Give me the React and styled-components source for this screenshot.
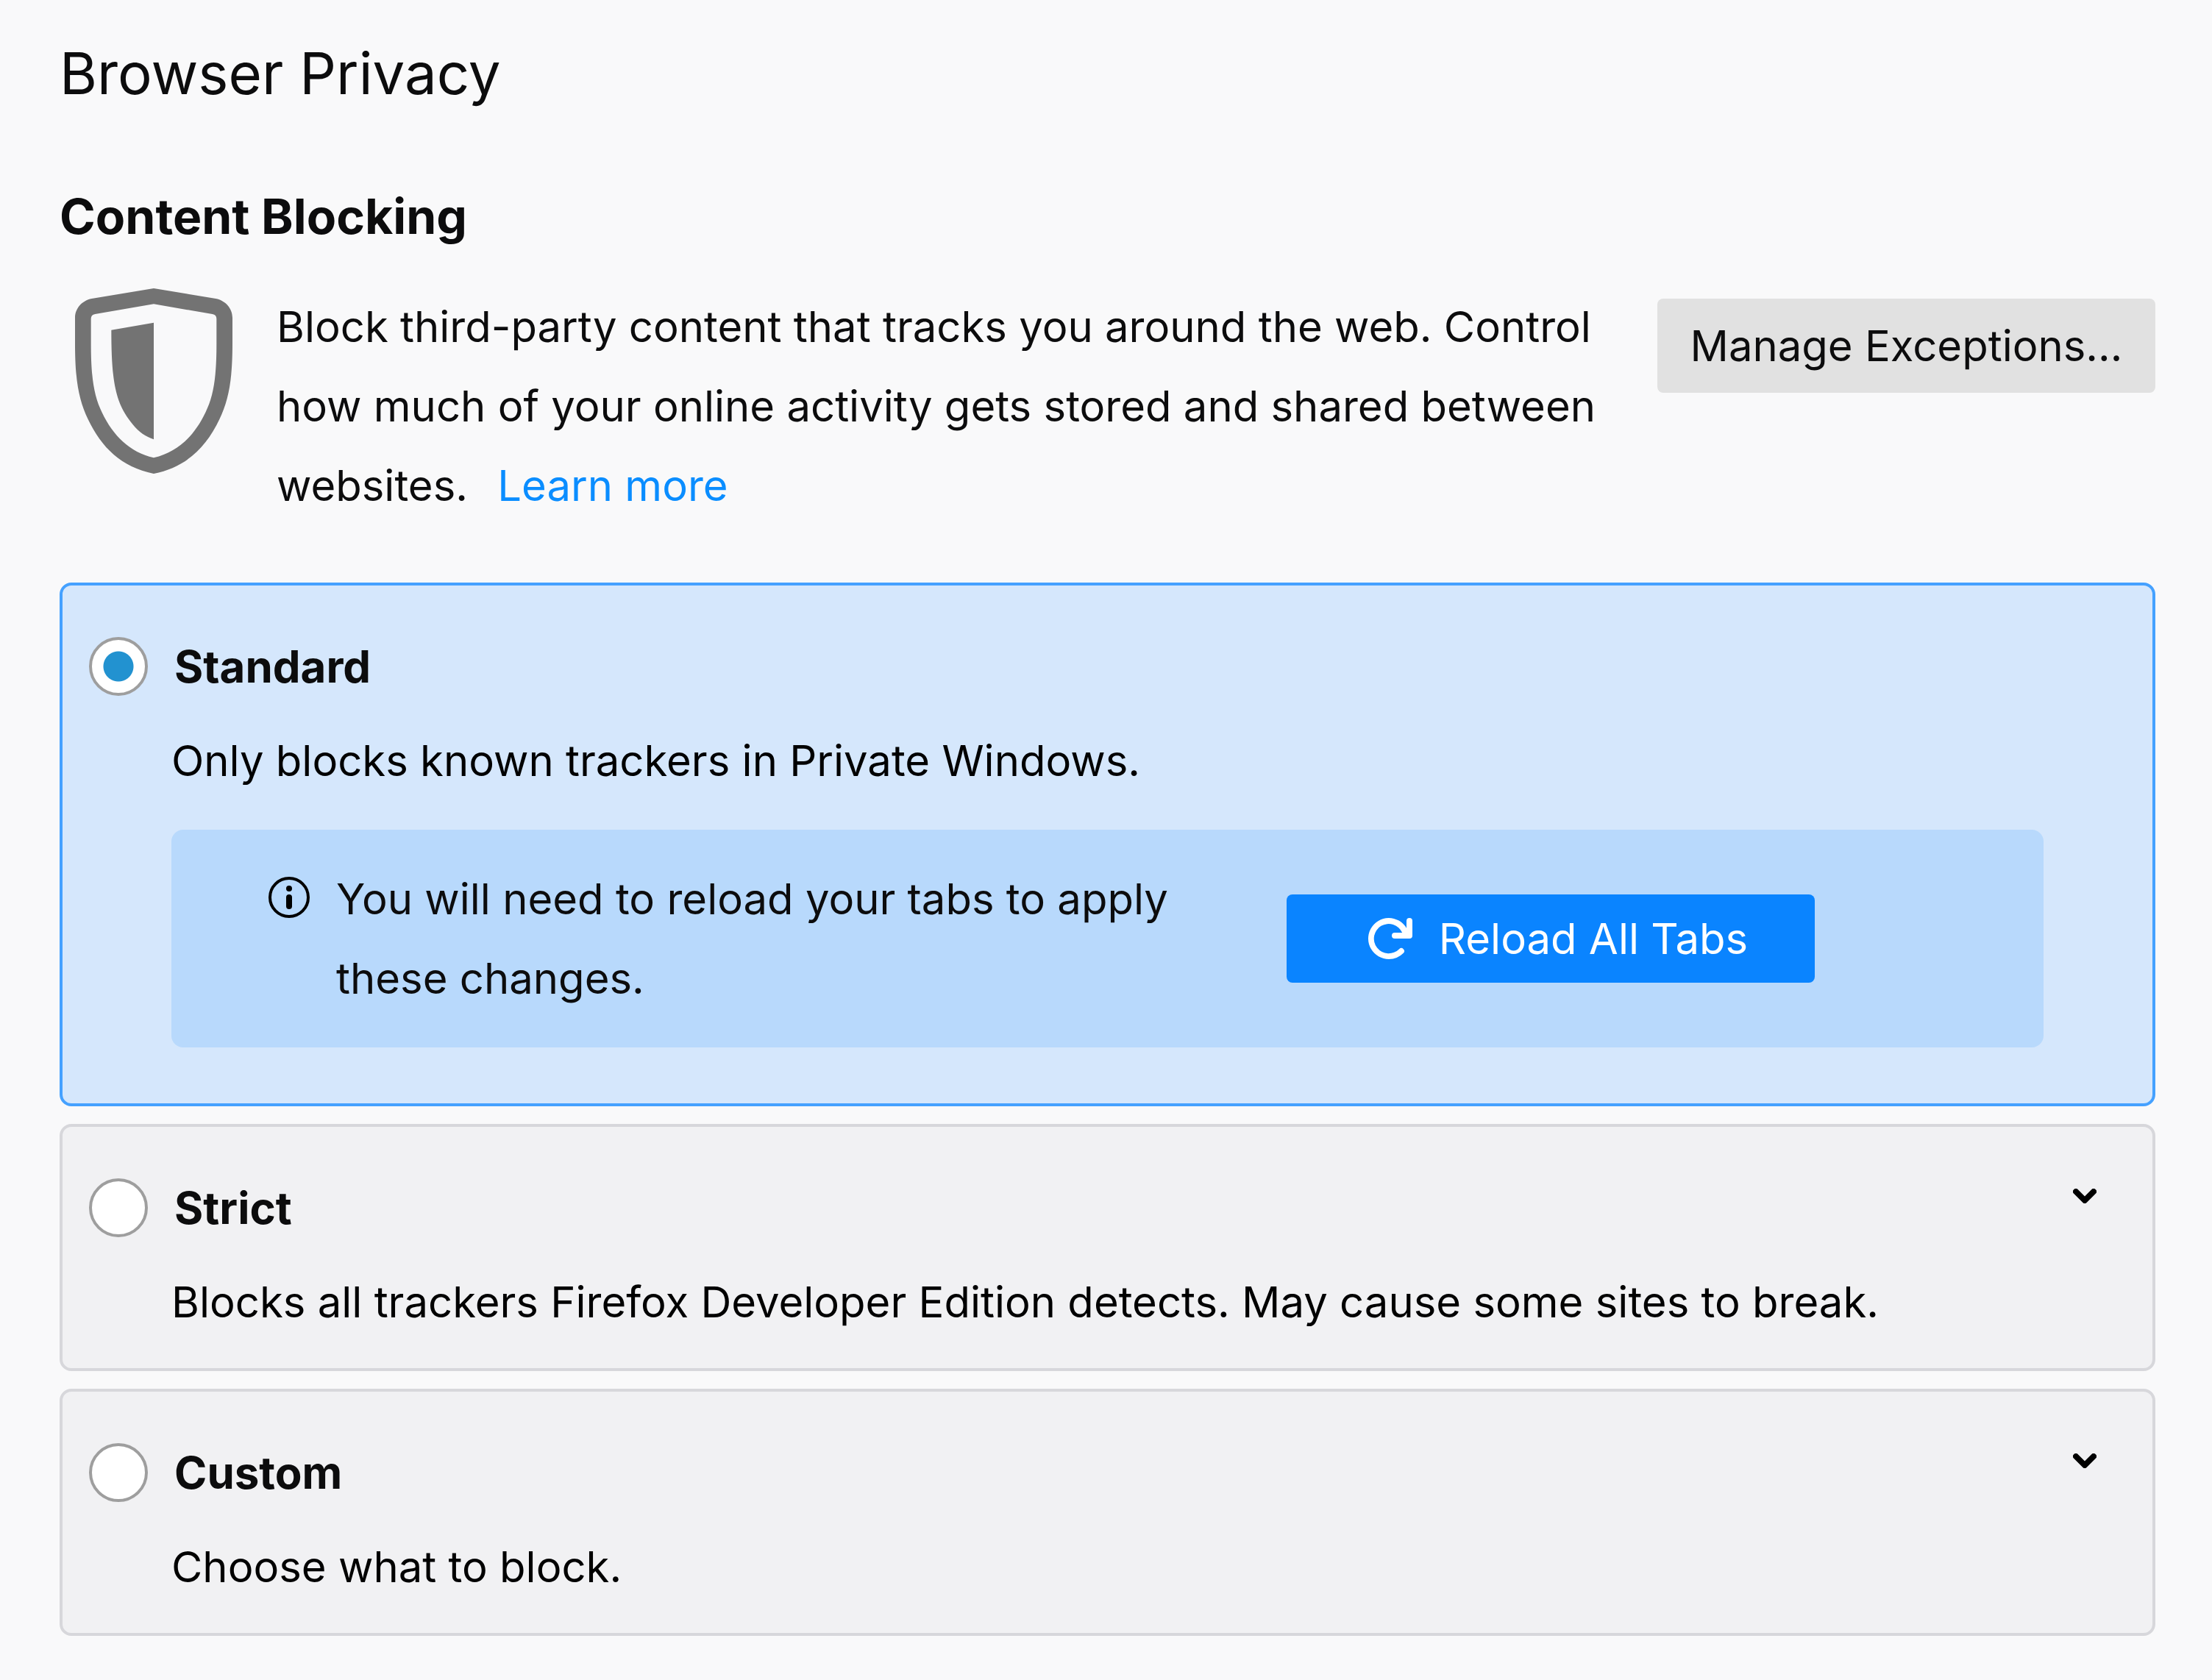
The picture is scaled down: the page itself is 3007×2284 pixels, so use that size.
import React, { useState } from "react";
import styled, { createGlobalStyle } from "styled-components";

const GlobalStyle = createGlobalStyle`
  *, *::before, *::after { box-sizing: border-box; }
  body {
    margin: 0;
    background: #f9f9fa;
    color: #0c0c0d;
    font-family: Inter, "Liberation Sans", sans-serif;
    font-size: 58px;
    line-height: 108px;
  }
  button, input { font: inherit; color: inherit; }
`;

const Page = styled.main`
  padding: 46px 77px 60px 81px;
`;

const PageTitle = styled.h1`
  margin: 0 0 86px;
  font-size: 78px;
  font-weight: 400;
`;

const SectionTitle = styled.h2`
  margin: 0 0 42px;
  font-size: 66px;
  font-weight: 700;
`;

const Intro = styled.div`
  display: flex;
  align-items: flex-start;
  padding-left: 21px;
  margin-bottom: 78px;
`;

const Shield = styled.svg`
  flex: none;
  width: 214px;
  height: 252px;
  margin-top: 2px;
  margin-right: 60px;
`;

const IntroText = styled.p`
  flex: 1;
  margin: 0;
`;

const LearnMore = styled.a`
  margin-left: 24px;
  color: #0a8dff;
  text-decoration: none;
`;

const Button = styled.button`
  flex: none;
  display: flex;
  align-items: center;
  justify-content: center;
  gap: 36px;
  border: 0;
  border-radius: 8px;
  line-height: 72px;
  background: ${(p) => (p.$primary ? "#0a84ff" : "#e1e1e1")};
  color: ${(p) => (p.$primary ? "#ffffff" : "#0c0c0d")};
`;

const ManageButton = styled(Button)`
  min-width: 677px;
  min-height: 128px;
  margin: 16px 0 0 56px;
`;

const ReloadButton = styled(Button)`
  min-width: 718px;
  min-height: 120px;
  padding: 0 16px 0 32px;
`;

const Options = styled.div`
  display: grid;
  gap: 24px;
`;

const Card = styled.section`
  padding: 70px 36px 36px;
  border: 4px solid ${(p) => (p.$selected ? "#45a1ff" : "#d7d7db")};
  border-radius: 16px;
  background: ${(p) => (p.$selected ? "#d5e7fc" : "#f1f1f3")};
`;

const CardHead = styled.div`
  display: flex;
  align-items: center;
  height: 80px;
`;

const CardLabel = styled.label`
  display: flex;
  align-items: center;
  gap: 36px;
  flex: 1;
  font-size: 60px;
  font-weight: 700;
`;

const Radio = styled.input`
  appearance: none;
  flex: none;
  width: 80px;
  height: 80px;
  margin: 0;
  border: 4px solid #9e9e9e;
  border-radius: 50%;
  background: #ffffff;

  &:checked {
    background: radial-gradient(circle, #2292d0 20px, #ffffff 21px);
  }
`;

const Expander = styled.button`
  display: flex;
  align-items: center;
  justify-content: center;
  align-self: flex-start;
  width: 48px;
  height: 48px;
  margin-right: 32px;
  padding: 0;
  border: 0;
  background: none;
`;

const CardBody = styled.div`
  padding: 34px 112px 0;
`;

const Description = styled.p`
  margin: 0;
  color: #000000;
`;

const Notice = styled.div`
  display: flex;
  align-items: center;
  margin: 40px 0;
  padding: 40px 311px 40px 132px;
  border-radius: 16px;
  background: #b8d9fc;
`;

const NoticeIcon = styled.svg`
  flex: none;
  align-self: flex-start;
  width: 56px;
  height: 56px;
  margin: 24px 36px 0 0;
`;

const NoticeText = styled.p`
  flex: 1;
  margin: 0 56px 0 0;
`;

const ShieldIcon = () => (
  <Shield viewBox="66 66 642 756" fill="#737373" aria-hidden="true">
    <path
      fillRule="evenodd"
      d="M387 66 L640 108 C680 116 708 148 708 186 V290 C708 440 693 520 655 600 C600 715 520 795 387 822 C254 795 174 715 119 600 C81 520 66 440 66 290 V186 C66 148 94 116 134 108 Z M387 130 L148 171 Q131 174 131 190 V290 C131 430 143 505 176 572 C222 668 288 733 387 757 C486 733 552 668 598 572 C631 505 643 430 643 290 V190 Q643 174 626 171 Z"
    />
    <path d="M387 206 L214 236 C214 380 222 460 245 525 C258 562 278 592 302 622 C325 651 355 672 387 682 Z" />
  </Shield>
);

const InfoIcon = () => (
  <NoticeIcon viewBox="0 0 56 56" aria-hidden="true">
    <circle cx="28" cy="28" r="26" fill="none" stroke="#000" strokeWidth="4" />
    <circle cx="28" cy="16" r="4" />
    <rect x="24" y="24" width="8" height="20" rx="4" />
  </NoticeIcon>
);

const ReloadIcon = () => (
  <svg width="64" height="64" viewBox="0 0 16 16" fill="currentColor" aria-hidden="true">
    <path d="M15 1a1 1 0 0 0-1 1v2.418A6.995 6.995 0 1 0 8 15a6.954 6.954 0 0 0 4.95-2.05 1 1 0 0 0-1.414-1.414A5.019 5.019 0 1 1 12.549 6H10a1 1 0 0 0 0 2h5a1 1 0 0 0 1-1V2a1 1 0 0 0-1-1z" />
  </svg>
);

const ChevronIcon = () => (
  <svg width="32" height="20" viewBox="0 0 32 20" fill="none" aria-hidden="true">
    <path d="M4 4l12 12L28 4" stroke="#000" strokeWidth="8" strokeLinecap="round" strokeLinejoin="round" />
  </svg>
);

const OPTIONS = [
  { id: "standard", title: "Standard", text: "Only blocks known trackers in Private Windows." },
  {
    id: "strict",
    title: "Strict",
    text: "Blocks all trackers Firefox Developer Edition detects. May cause some sites to break.",
  },
  { id: "custom", title: "Custom", text: "Choose what to block." },
];

export default function App() {
  const [selected, setSelected] = useState("standard");

  return (
    <>
      <GlobalStyle />
      <Page>
        <PageTitle>Browser Privacy</PageTitle>
        <SectionTitle>Content Blocking</SectionTitle>
        <Intro>
          <ShieldIcon />
          <IntroText>
            Block third-party content that tracks you around the web. Control how much of your
            online activity gets stored and shared between websites.{" "}
            <LearnMore href="#learn-more">Learn more</LearnMore>
          </IntroText>
          <ManageButton type="button">Manage Exceptions…</ManageButton>
        </Intro>
        <Options role="radiogroup" aria-label="Content Blocking">
          {OPTIONS.map(({ id, title, text }) => (
            <Card key={id} $selected={selected === id}>
              <CardHead>
                <CardLabel htmlFor={id}>
                  <Radio
                    type="radio"
                    name="blocking"
                    id={id}
                    checked={selected === id}
                    onChange={() => setSelected(id)}
                  />
                  {title}
                </CardLabel>
                {selected !== id && (
                  <Expander type="button" aria-label={`Show ${title} details`}>
                    <ChevronIcon />
                  </Expander>
                )}
              </CardHead>
              <CardBody>
                <Description>{text}</Description>
                {selected === id && (
                  <Notice>
                    <InfoIcon />
                    <NoticeText>You will need to reload your tabs to apply these changes.</NoticeText>
                    <ReloadButton type="button" $primary>
                      <ReloadIcon />
                      Reload All Tabs
                    </ReloadButton>
                  </Notice>
                )}
              </CardBody>
            </Card>
          ))}
        </Options>
      </Page>
    </>
  );
}
